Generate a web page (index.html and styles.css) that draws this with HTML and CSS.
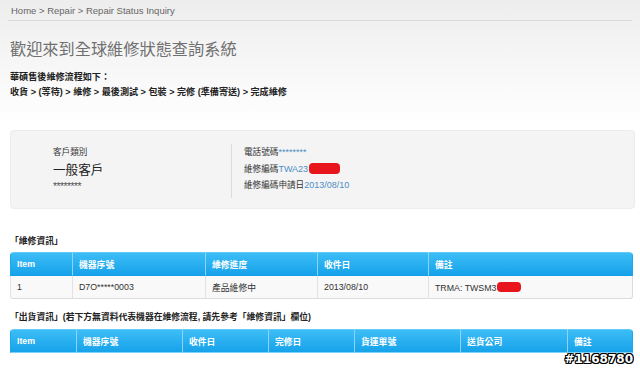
FILE: index.html
```html
<!DOCTYPE html>
<html lang="zh-Hant">
<head>
<meta charset="utf-8">
<title>Repair Status Inquiry</title>
<link rel="stylesheet" href="styles.css">
</head>
<body>
<div class="page">
  <div class="crumb">Home &gt; Repair &gt; Repair Status Inquiry</div>
  <div class="main">
    <h1 class="title">歡迎來到全球維修狀態查詢系統</h1>
    <p class="flow">華碩售後維修流程如下：</p>
    <p class="flow">收貨 &gt; (等待) &gt; 維修 &gt; 最後測試 &gt; 包裝 &gt; 完修 (準備寄送) &gt; 完成維修</p>

    <div class="infobox">
      <div class="cust">
        <div class="c-label">客戶類別</div>
        <div class="c-type">一般客戶</div>
        <div class="c-stars">********</div>
      </div>
      <div class="details">
        <div class="d-line">電話號碼<span class="val">********</span></div>
        <div class="d-line">維修編碼<span class="val">TWA23</span><span class="redact"></span></div>
        <div class="d-line">維修編碼申請日<span class="val">2013/08/10</span></div>
      </div>
    </div>

    <div class="sect sect1">「維修資訊」</div>
    <table class="grid">
      <colgroup>
        <col class="w62"><col class="w133"><col class="w112"><col class="w111"><col>
      </colgroup>
      <thead>
        <tr><th>Item</th><th>機器序號</th><th>維修進度</th><th>收件日</th><th>備註</th></tr>
      </thead>
      <tbody>
        <tr><td>1</td><td>D7O*****0003</td><td>產品維修中</td><td>2013/08/10</td><td>TRMA: TWSM3<span class="redact r2"></span></td></tr>
      </tbody>
    </table>

    <div class="sect sect2">「出貨資訊」(若下方無資料代表機器在維修流程, 請先參考「維修資訊」欄位)</div>
    <table class="grid grid2">
      <colgroup>
        <col class="w66"><col class="w106"><col class="w86"><col class="w86"><col class="w106"><col class="w107"><col>
      </colgroup>
      <thead>
        <tr><th>Item</th><th>機器序號</th><th>收件日</th><th>完修日</th><th>貨運單號</th><th>送貨公司</th><th>備註</th></tr>
      </thead>
    </table>
  </div>
  <div class="mark">#1168780</div>
</div>
</body>
</html>
```
FILE: styles.css
```css
html, body {
  margin: 0;
  padding: 0;
}
body {
  width: 640px;
  height: 369px;
  overflow: hidden;
  background: linear-gradient(#ededed 0px, #f6f6f6 60px, #ffffff 125px);
  font-family: "Liberation Sans", "Noto Sans CJK TC", sans-serif;
  color: #333;
}
.page {
  position: relative;
  height: 369px;
}
.crumb {
  margin: 0 8px;
  padding: 5px 0 0 3px;
  height: 15px;
  line-height: 12px;
  font-size: 9.5px;
  color: #666;
  border-bottom: 1px solid #d8d8d8;
}
.main {
  padding: 0 5px 0 10px;
}
.title {
  margin: 18px 0 0 0;
  font-size: 16.2px;
  line-height: 20px;
  font-weight: normal;
  color: #707070;
  letter-spacing: 0;
}
.flow {
  margin: 0;
  font-size: 9.1px;
  line-height: 15px;
  font-weight: bold;
  color: #222;
}
.title + .flow {
  margin-top: 11px;
}
.infobox {
  margin-top: 30px;
  height: 79px;
  box-sizing: border-box;
  padding-top: 13px;
  background: #f4f4f4;
  border: 1px solid #ececec;
  border-radius: 4px;
  display: flex;
}
.cust {
  width: 220px;
  box-sizing: border-box;
  padding-left: 42px;
  height: 54px;
}
.c-label {
  font-size: 8.6px;
  line-height: 16px;
  color: #333;
}
.c-type {
  font-size: 12.6px;
  line-height: 20px;
  color: #222;
}
.c-stars {
  font-size: 10.5px;
  line-height: 12px;
  color: #555;
  letter-spacing: -0.6px;
}
.details {
  border-left: 1px solid #dcdcdc;
  padding-left: 12px;
  height: 54px;
}
.d-line {
  font-size: 8.6px;
  line-height: 16.5px;
  color: #333;
  display: flex;
  align-items: center;
}
.val {
  color: #4d8fc4;
  font-size: 9px;
}
.redact {
  display: inline-block;
  width: 31px;
  height: 11px;
  margin-left: 1px;
  background: #e8151d;
  border-radius: 4px;
}
.r2 {
  width: 24px;
  height: 10px;
  vertical-align: -1px;
}
.sect {
  font-size: 8.8px;
  line-height: 16px;
  font-weight: bold;
  color: #222;
}
.sect1 {
  margin-top: 24px;
}
.sect2 {
  margin-top: 10px;
}
.grid {
  margin-top: 3px;
  width: 623px;
  border-collapse: separate;
  border-spacing: 0;
  table-layout: fixed;
  font-size: 8.8px;
}
.grid2 {
  margin-top: 4px;
}
.w62 { width: 62px; }
.w133 { width: 133px; }
.w112 { width: 112px; }
.w111 { width: 111px; }
.w66 { width: 66px; }
.w106 { width: 106px; }
.w86 { width: 86px; }
.w107 { width: 107px; }
.grid th {
  height: 22px;
  padding: 0 0 0 6px;
  text-align: left;
  color: #fff;
  font-weight: bold;
  background: linear-gradient(#3dbdf6, #16a2ea);
  border-left: 1px solid #8fd4f6;
  border-top: 1px solid #62cbf7;
  border-bottom: 1px solid #12a0e6;
}
.grid2 th {
  height: 22px;
  border-bottom: 1px solid #7fd0f5;
}
.grid th:first-child {
  border-left: 1px solid #1da8ec;
  border-top-left-radius: 4px;
}
.grid th:last-child {
  border-top-right-radius: 4px;
  border-right: 1px solid #1da8ec;
}
.grid td {
  height: 22px;
  padding: 0 0 0 6px;
  background: #f9f9f9;
  color: #333;
  border-left: 1px solid #e2e2e2;
  border-bottom: 1px solid #dcdcdc;
}
.grid td:last-child {
  border-right: 1px solid #dcdcdc;
}
.grid tbody tr:last-child td:first-child {
  border-bottom-left-radius: 3px;
}
.grid tbody tr:last-child td:last-child {
  border-bottom-right-radius: 3px;
}
.mark {
  position: absolute;
  right: 7px;
  bottom: 3px;
  font-family: "DejaVu Sans", sans-serif;
  font-size: 12px;
  font-weight: bold;
  line-height: 14px;
  color: #fff;
  letter-spacing: 0;
  text-shadow: 1px 0 0 #000, -1px 0 0 #000, 0 1px 0 #000, 0 -1px 0 #000, 1px 1px 0 #000, -1px -1px 0 #000, 1px -1px 0 #000, -1px 1px 0 #000;
}
```
